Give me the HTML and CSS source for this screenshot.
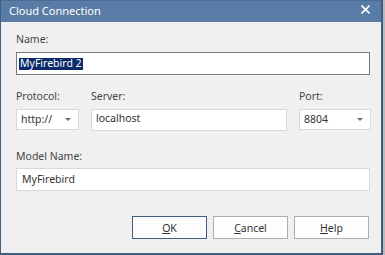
FILE: index.html
```html
<!DOCTYPE html>
<html lang="en">
<head>
    <meta charset="UTF-8">
    <meta name="viewport" content="width=device-width, initial-scale=1.0">
    <title>Cloud Connection</title>
    <link rel="stylesheet" href="styles.css">
</head>
<body>
    <div class="window">
        <div class="titlebar">
            <span class="title">Cloud Connection</span>
            <svg class="close" width="9" height="9" viewBox="0 0 9 9">
                <path d="M0.5 0.5 L8.5 8.5 M8.5 0.5 L0.5 8.5" stroke="#fff" stroke-width="1.6"/>
            </svg>
        </div>
        <div class="content">
            <div class="field">
                <label>Name:</label>
                <div class="input focused"><span class="selected">MyFirebird 2</span></div>
            </div>
            <div class="row">
                <div class="field">
                    <label>Protocol:</label>
                    <div class="combo">http://<span class="arrow"></span></div>
                </div>
                <div class="field">
                    <label>Server:</label>
                    <div class="input server">localhost</div>
                </div>
                <div class="field">
                    <label>Port:</label>
                    <div class="combo">8804<span class="arrow"></span></div>
                </div>
            </div>
            <div class="field model">
                <label>Model Name:</label>
                <div class="input">MyFirebird</div>
            </div>
            <div class="buttons">
                <button class="btn default"><u>O</u>K</button>
                <button class="btn"><u>C</u>ancel</button>
                <button class="btn"><u>H</u>elp</button>
            </div>
        </div>
    </div>
</body>
</html>
```
FILE: styles.css
```css
body {
    margin: 0;
    background: #b9b9b9;
    font-family: 'Noto Sans', 'Open Sans', sans-serif;
    font-size: 10.5px;
    color: #3a3a3a;
}
.window {
    width: 380px;
    height: 253px;
    border-left: 1px solid #3f5e81;
    border-right: 2px solid #3f5e81;
    border-bottom: 2px solid #3f5e81;
    background: #f0f0f0;
    display: flex;
    flex-direction: column;
}
.titlebar {
    height: 22px;
    background: #587ca5;
    border-top: 1px solid #4b6d94;
    box-sizing: border-box;
    display: flex;
    align-items: center;
    justify-content: space-between;
    padding: 0 11px 2px 8px;
}
.title {
    color: #fff;
    font-size: 11px;
}
.close {
    margin-top: -3px;
}
.content {
    padding: 8px 11px 0 15px;
    display: flex;
    flex-direction: column;
}
.field {
    display: flex;
    flex-direction: column;
}
label {
    height: 22px;
    line-height: 18px;
    color: #454545;
}
.input {
    height: 23px;
    box-sizing: border-box;
    border: 1px solid #d9d9d9;
    background: #fff;
    padding: 2px 5px;
    line-height: 17px;
    color: #333;
}
.input.focused {
    border-color: #7a7a7a;
    padding: 2px 2px;
}
.selected {
    display: inline-block;
    background: #0c2a6c;
    color: #fff;
    line-height: 11px;
    padding: 0 1px 1px 1px;
    margin-top: 1px;
}
.row {
    display: grid;
    grid-template-columns: 63px 196px 72px;
    column-gap: 12px;
    margin-top: 13px;
}
.row label {
    height: 21px;
    line-height: 16px;
}
.input.server {
    height: 22px;
    padding: 0 4px;
}
.combo {
    height: 21px;
    box-sizing: border-box;
    border: 1px solid #d9d9d9;
    background: #fff;
    padding: 0 4px;
    line-height: 19px;
    display: flex;
    justify-content: space-between;
    align-items: center;
    color: #333;
}
.arrow {
    width: 0;
    height: 0;
    border-left: 3px solid transparent;
    border-right: 3px solid transparent;
    border-top: 3px solid #6d6d6d;
    margin-right: 3px;
}
.model {
    margin-top: 17px;
}
.model label {
    height: 20px;
    line-height: 16px;
}
.buttons {
    display: flex;
    justify-content: flex-end;
    gap: 6px;
    margin-top: 25px;
    padding-right: 1px;
}
.btn {
    width: 75px;
    height: 23px;
    border: 1px solid #adadad;
    background: #fdfdfd;
    font-family: 'Noto Sans', 'Open Sans', sans-serif;
    font-size: 10.5px;
    color: #333;
    padding: 0;
}
.btn.default {
    border-color: #3f5e81;
}
```
